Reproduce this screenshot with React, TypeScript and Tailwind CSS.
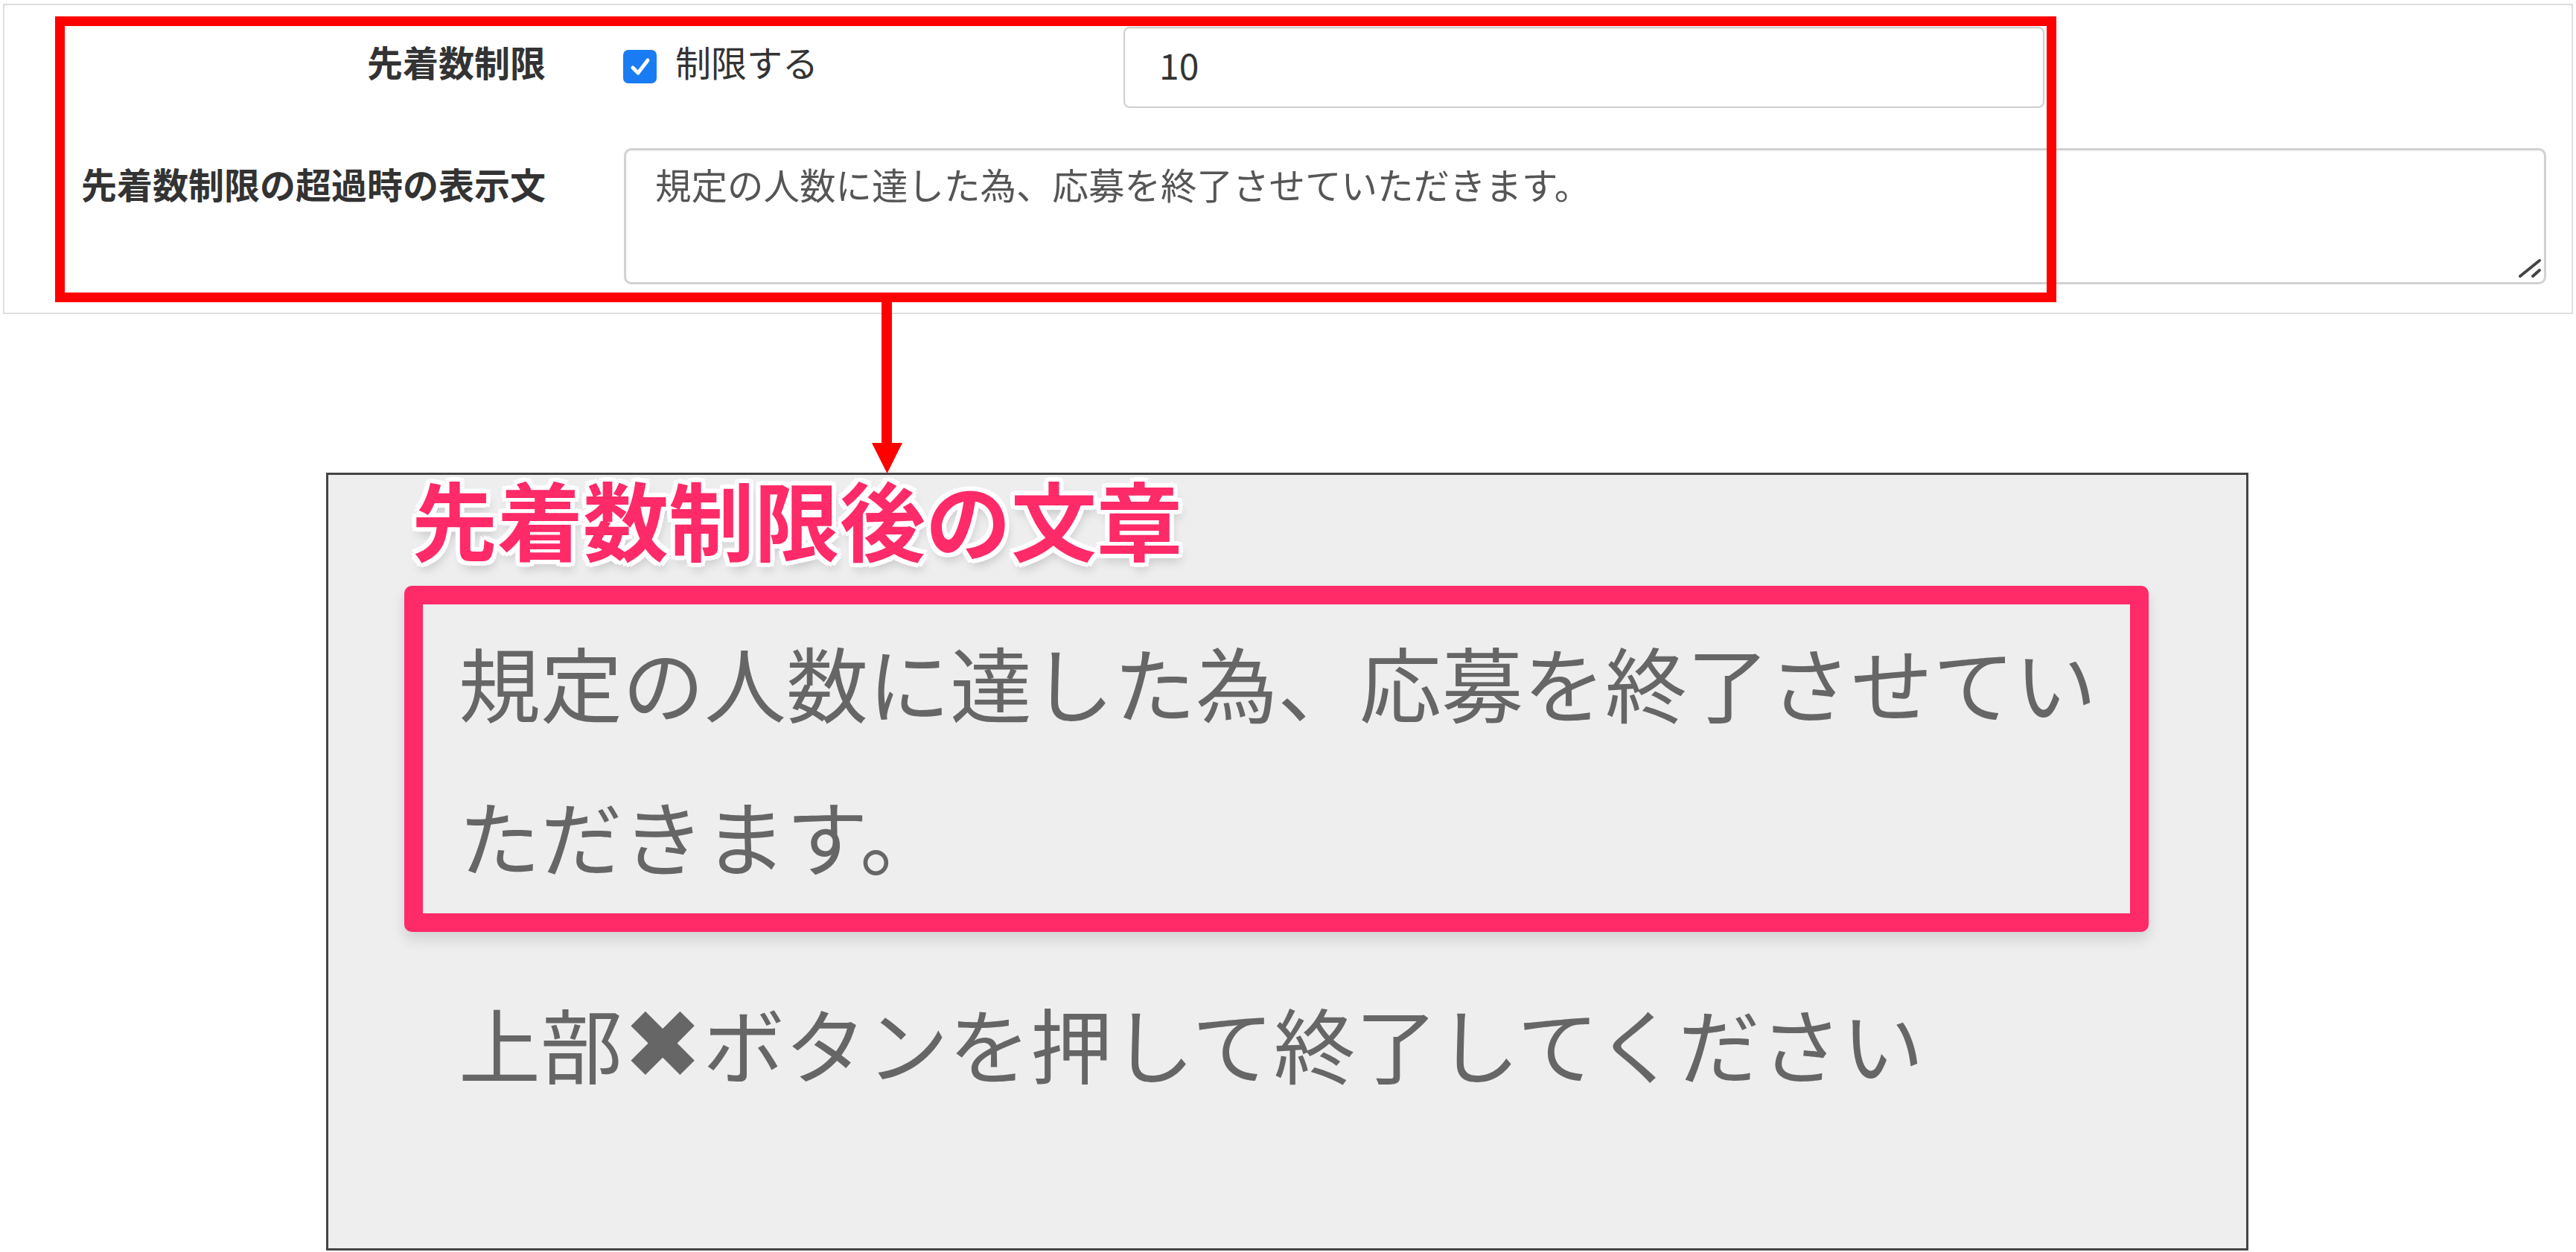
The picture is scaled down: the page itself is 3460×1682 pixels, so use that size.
import React from 'react';

const font = "font-['Noto_Sans_CJK_JP','Noto_Sans',sans-serif]";

const ResizeGrip: React.FC = () => (
  <svg className="absolute right-[6px] bottom-[7px]" width="32" height="28" viewBox="0 0 32 28">
    <g stroke="#444" strokeWidth="4" strokeLinecap="round">
      <line x1="3" y1="24" x2="29" y2="3" />
      <line x1="20" y1="24" x2="29" y2="16" />
    </g>
  </svg>
);

const SettingsPanel: React.FC = () => (
  <div className="ml-[4px] mt-[5px] w-[3452px] h-[417px] border-2 border-[#dedede] pt-[29px]">
    <div className="flex items-start h-[109px]">
      <div className="w-[727px] pt-[10px] text-right text-[48px] leading-[72px] font-bold text-[#333]">
        先着数制限
      </div>
      <div className="ml-[104px] w-[672px] flex items-start">
        <div className="mt-[31px] w-[45px] h-[45px] rounded-[7px] bg-[#1a7cf2] flex items-center justify-center">
          <svg width="30" height="30" viewBox="0 0 30 30">
            <path d="M5 16 L12 23 L25 6" fill="none" stroke="#fff" strokeWidth="5" strokeLinecap="round" strokeLinejoin="round" />
          </svg>
        </div>
        <span className="ml-[25px] pt-[10px] text-[48px] leading-[72px] text-[#333]">制限する</span>
      </div>
      <input
        readOnly
        value="10"
        className="w-[1237px] h-[109px] border-2 border-[#cfcfcf] rounded-[8px] pl-[46px] pb-[10px] text-[48px] text-[#333] bg-white outline-none shadow-[inset_0_1px_2px_rgba(0,0,0,0.06)]"
      />
    </div>

    <div className="mt-[54px] flex items-start">
      <div className="w-[727px] pt-[11px] text-right text-[48px] leading-[72px] font-bold text-[#333]">
        先着数制限の超過時の表示文
      </div>
      <div className="relative ml-[105px] w-[2582px] h-[183px]">
        <textarea
          readOnly
          defaultValue="規定の人数に達した為、応募を終了させていただきます。"
          className="w-full h-full resize-none border-[3px] border-[#d2d2d2] rounded-[10px] px-[39px] pt-[10px] text-[48.5px] leading-[70px] text-[#555] bg-white outline-none shadow-[inset_0_1px_2px_rgba(0,0,0,0.06)]"
        />
        <ResizeGrip />
      </div>
    </div>
  </div>
);

const PreviewPanel: React.FC = () => (
  <div className="ml-[438px] mt-[213px] w-[2582px] h-[1045px] border-[3px] border-[#444] bg-[#eeeeee]">
    <div className="ml-[112px] text-[115px] leading-none font-bold text-[#ff2a68] [text-shadow:0_0_3px_#fff,6px_0_0_#fff,-6px_0_0_#fff,0_6px_0_#fff,0_-6px_0_#fff,5px_5px_0_#fff,-5px_-5px_0_#fff,5px_-5px_0_#fff,-5px_5px_0_#fff,3px_10px_14px_rgba(0,0,0,0.18)]">
      先着数制限後の文章
    </div>
    <div className="ml-[102px] mt-[34px] w-[2343px] h-[465px] border-[25px] border-[#ff2a68] rounded-[10px] pl-[48px] text-[110px] leading-[206px] text-[#666] shadow-[0_10px_18px_rgba(0,0,0,0.12)]">
      規定の人数に達した為、応募を終了させてい
      <br />
      ただきます。
    </div>
    <div className="ml-[175px] mt-[67px] flex items-center h-[163px] text-[110px] leading-[163px] text-[#666]">
      <span>上部</span>
      <span className="inline-flex w-[108px] justify-center font-['DejaVu_Sans'] text-[128px] leading-none pt-[6px]">✖</span>
      <span>ボタンを押して終了してください</span>
    </div>
  </div>
);

export default function App() {
  return (
    <div className={`relative w-[3460px] h-[1682px] bg-white overflow-hidden ${font}`}>
      <SettingsPanel />
      <PreviewPanel />

      {/* annotation: red frame and arrow */}
      <div className="absolute left-[74px] top-[22px] w-[2688px] h-[384px] border-[13px] border-[#ff0000] pointer-events-none" />
      <svg className="absolute left-[1171px] top-[400px]" width="41" height="236" viewBox="0 0 41 236">
        <rect x="13" y="0" width="14" height="200" fill="#ff0000" />
        <polygon points="0,195 41,195 20.5,236" fill="#ff0000" />
      </svg>
    </div>
  );
}
